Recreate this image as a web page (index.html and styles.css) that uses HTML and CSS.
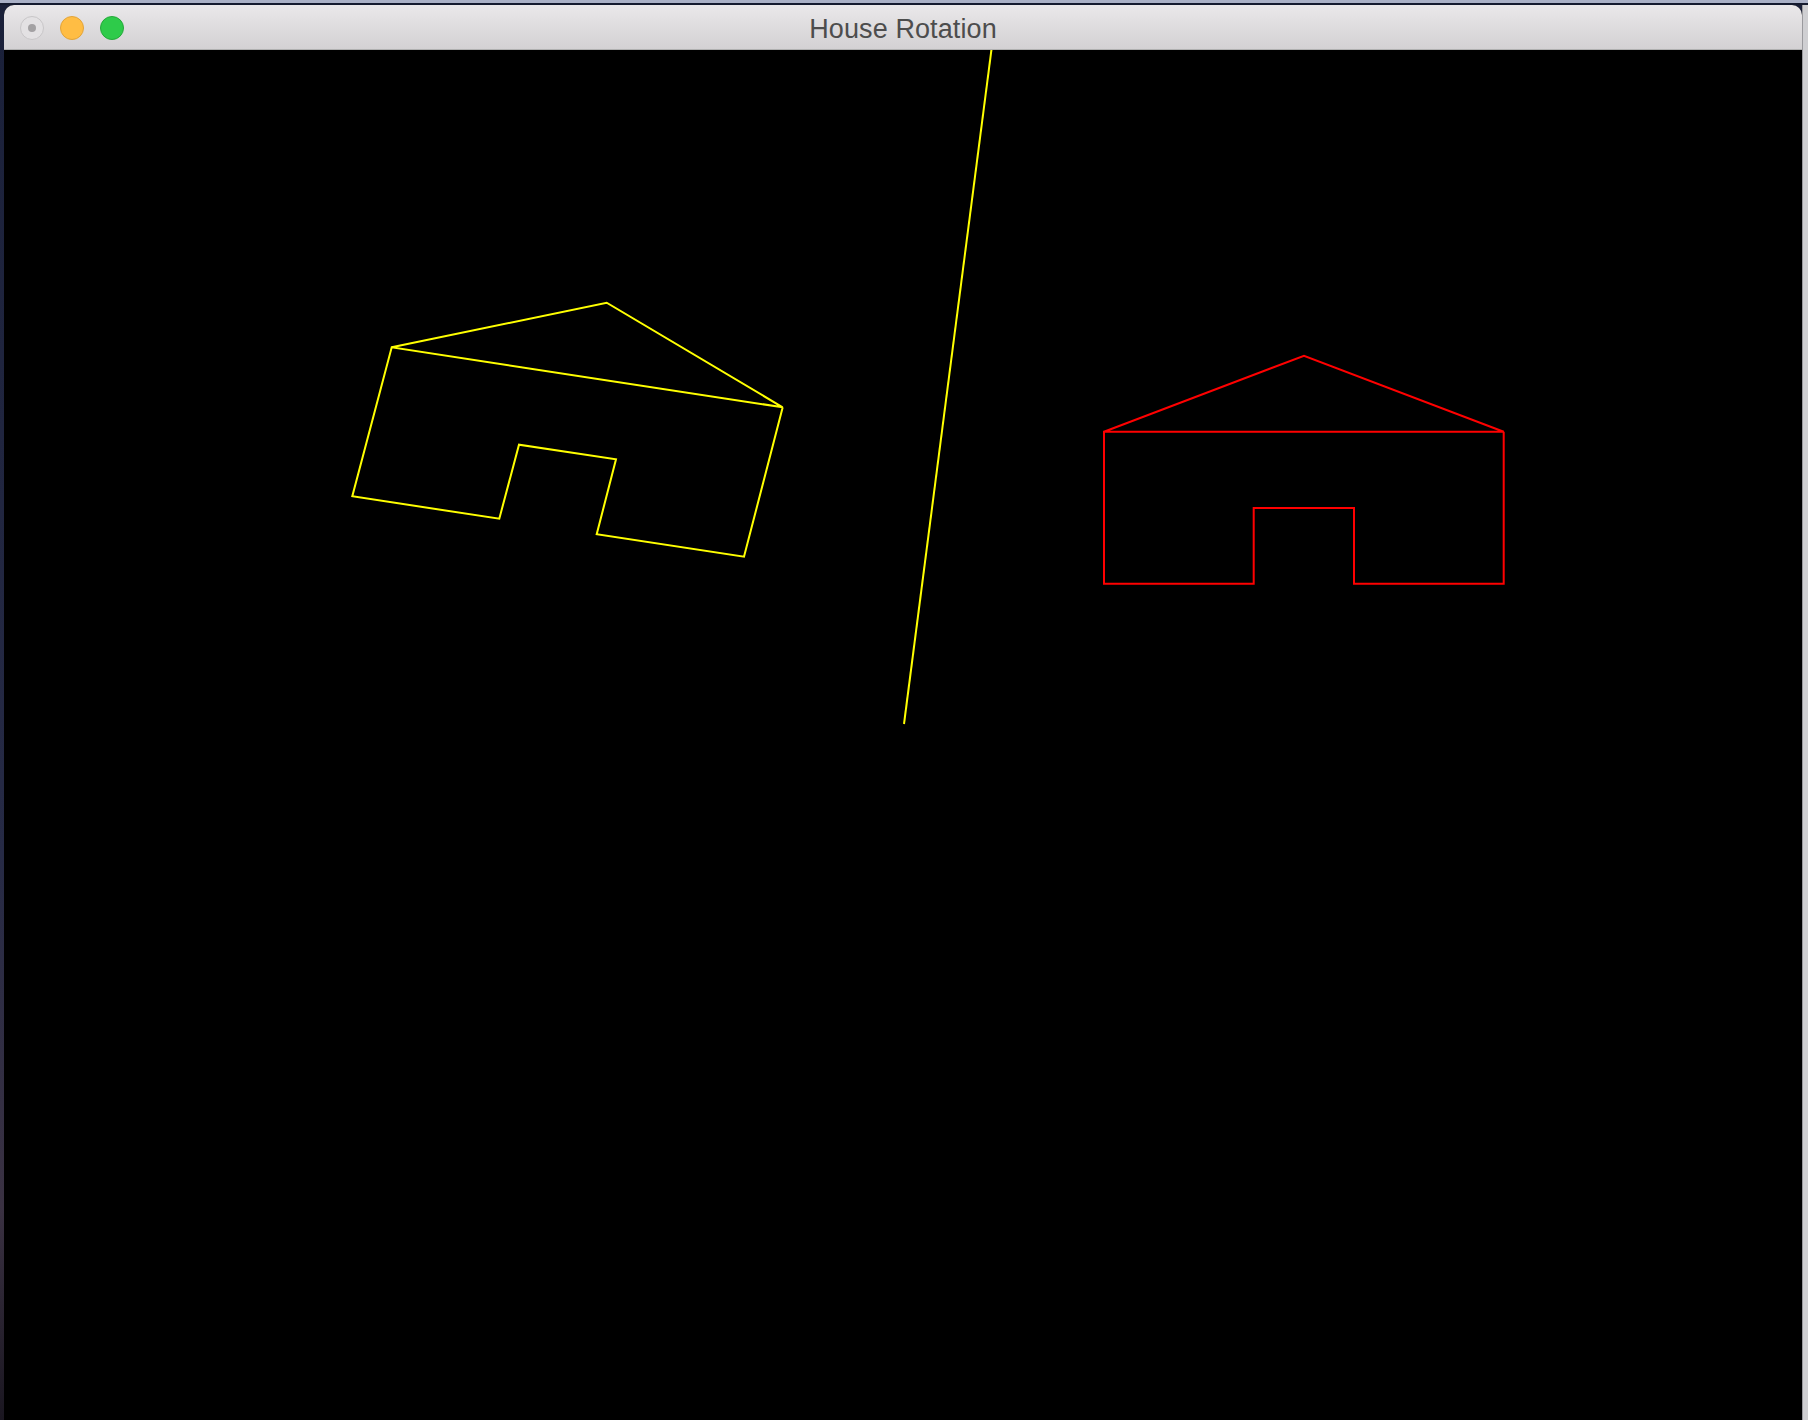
FILE: index.html
```html
<!DOCTYPE html>
<html>
<head>
<meta charset="utf-8">
<title>House Rotation</title>
<link rel="stylesheet" href="styles.css">
</head>
<body>
<div class="menubar"></div>
<div class="desk">
  <div class="window">
    <div class="titlebar">
      <div class="lights">
        <span class="light close"><span class="dot"></span></span>
        <span class="light minimize"></span>
        <span class="light zoom"></span>
      </div>
      <div class="title">House Rotation</div>
    </div>
    <div class="canvas">
      <svg class="scene" width="1798" height="1370" viewBox="4 50 1798 1370" xmlns="http://www.w3.org/2000/svg">
        <line x1="994" y1="30" x2="904" y2="724" stroke="#ffff00" stroke-width="2"/>
        <polyline fill="none" stroke="#ffff00" stroke-width="2" stroke-linejoin="miter"
          points="391.7,347.3 606.7,302.7 782.7,407.3 391.7,347.3 352.3,496.3 499.3,518.7 519,444.7 616,459.3 596.7,534.3 744,556.7 782.7,407.3"/>
        <polyline fill="none" stroke="#ff0000" stroke-width="2"
          points="1104,431.7 1304,355.7 1503.7,431.7 1104,431.7 1104,583.7 1253.7,583.7 1253.7,508 1354,508 1354,583.7 1503.7,583.7 1503.7,431.7"/>
      </svg>
    </div>
  </div>
  <div class="side"></div>
</div>
</body>
</html>
```

FILE: styles.css
```css
html, body {
  margin: 0;
  padding: 0;
  height: 1420px;
  overflow: hidden;
}
body {
  background: #181e36;
  font-family: "Liberation Sans", Arial, sans-serif;
}
.menubar {
  height: 3px;
  background: #a9b0c6;
  border-bottom: 2px solid #141a2e;
}
.desk {
  display: flex;
  height: 1415px;
  padding-left: 4px;
  background: linear-gradient(to bottom, #1a2039 0%, #262a45 60%, #3a3142 85%, #1a1620 100%);
}
.window {
  width: 1798px;
  display: flex;
  flex-direction: column;
  border-radius: 10px 10px 0 0;
  overflow: hidden;
  background: #000;
}
.titlebar {
  position: relative;
  height: 44px;
  border-bottom: 1px solid #b0b0b0;
  background: linear-gradient(to bottom, #eae8ea 0%, #dcdadc 60%, #d3d1d3 100%);
  display: flex;
  align-items: center;
  justify-content: center;
}
.lights {
  position: absolute;
  left: 16px;
  top: 11px;
  display: flex;
  gap: 16px;
}
.light {
  width: 24px;
  height: 24px;
  border-radius: 50%;
  box-sizing: border-box;
  display: flex;
  align-items: center;
  justify-content: center;
}
.close {
  background: #e3e1e3;
  border: 1px solid #c8c6c8;
}
.close .dot {
  width: 8px;
  height: 8px;
  border-radius: 50%;
  background: #a3a1a3;
}
.minimize {
  background: #ffbd44;
  border: 1px solid #e2a43a;
}
.zoom {
  background: #2ecb4a;
  border: 1px solid #25a93a;
}
.title {
  font-size: 27px;
  color: #4d4d4d;
  letter-spacing: 0.1px;
  margin-top: 4px;
}
.canvas {
  flex: 1;
  background: #000;
  overflow: hidden;
}
.scene {
  display: block;
}
.side {
  width: 6px;
  background: #cfcfd2;
  border-left: 1px solid #9a9a9e;
  box-sizing: border-box;
}
```
